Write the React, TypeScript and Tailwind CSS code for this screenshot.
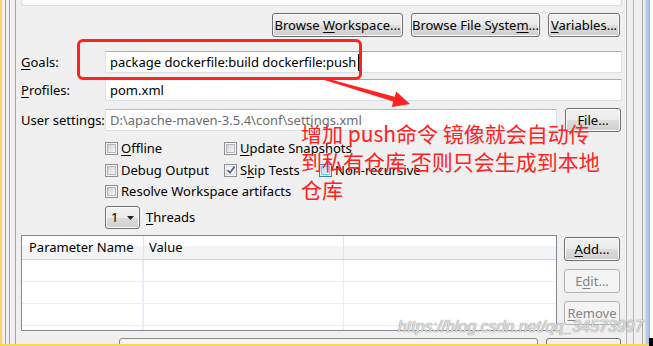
import clsx from 'clsx';
import type { ReactNode } from 'react';

const btnFace =
  'border-[#707070] bg-[linear-gradient(#f2f2f2,#ebebeb_50%,#dddddd_50%,#cfcfcf)] shadow-[inset_0_0_0_1px_#fcfcfc] text-black';

function Btn({ children, className, disabled }: { children: ReactNode; className?: string; disabled?: boolean }) {
  return (
    <div
      className={clsx(
        'flex h-[24px] shrink-0 items-center justify-center rounded-[3px] border',
        disabled ? 'border-[#adb2b5] bg-[#f4f4f4] text-[#838383]' : btnFace,
        className
      )}
    >
      <span className="whitespace-nowrap">{children}</span>
    </div>
  );
}

function U({ children }: { children: ReactNode }) {
  return <span className="underline underline-offset-[2px]">{children}</span>;
}

function Field({ children, className }: { children?: ReactNode; className?: string }) {
  return (
    <div
      className={clsx(
        'flex h-[22px] shrink-0 items-center whitespace-nowrap border border-[#dbe0e7] border-t-[#abadb3] bg-white pl-[4px]',
        className
      )}
    >
      {children}
    </div>
  );
}

function CheckBox({ checked, hot }: { checked?: boolean; hot?: boolean }) {
  return (
    <span
      className={clsx(
        'relative flex h-[13px] w-[13px] shrink-0 items-center justify-center border',
        hot ? 'border-[#3c7fb1] bg-[#eaf6fd]' : 'border-[#8f8f8f] bg-[#f6f6f6]'
      )}
    >
      <span
        className={clsx(
          'h-[9px] w-[9px] border',
          hot
            ? 'border-[#79c6f9] bg-[linear-gradient(135deg,#b1dffd,#e9f7fe)]'
            : checked
              ? 'border-[#dcdcdc] bg-[#fafafa]'
              : 'border-[#b4b8be] bg-[linear-gradient(135deg,#cfd2d7,#f7f7f7)]'
        )}
      />
      {checked && (
        <svg className="absolute left-[1px] top-[0px]" width="10" height="10" viewBox="0 0 10 10">
          <path d="M1.5 5.2 L4 7.8 L8.6 1.4" stroke="#4a5f97" strokeWidth="1.7" fill="none" />
        </svg>
      )}
    </span>
  );
}

function Check({ label, checked, hot }: { label: ReactNode; checked?: boolean; hot?: boolean }) {
  return (
    <div className="flex items-center gap-[3px] whitespace-nowrap">
      <CheckBox checked={checked} hot={hot} />
      <span>{label}</span>
    </div>
  );
}

export default function App() {
  return (
    <div className="relative h-[346px] w-[653px] overflow-hidden bg-[#f0f0f0] font-['Noto_Sans',sans-serif] text-[13px] leading-none text-black">
      <div className="flex h-[344px] overflow-hidden">
        {/* left frame */}
        <div className="flex shrink-0">
          <div className="w-[2px] bg-[#fdd45a]" />
          <div className="w-[3px]" />
          <div className="w-px bg-[#a3a3a3]" />
          <div className="w-[3px]" />
          <div className="w-px bg-[#a3a3a3]" />
          <div className="w-[5px]" />
          <div className="w-px bg-[#a3a3a3]" />
          <div className="w-[5px]" />
        </div>

        {/* main form */}
        <div className="w-[601px] shrink-0">
          <div className="h-[6px] rounded-b-[3px] border-x border-b border-[#dcdcdc] bg-[#fcfcfc]" />

          <div className="mt-[7px] flex justify-end gap-[8px] pr-[2px]">
            <Btn className="w-[131px]">
              Browse <U>W</U>orkspace...
            </Btn>
            <Btn className="w-[129px]">
              Browse File Syste<U>m</U>...
            </Btn>
            <Btn className="w-[72px]">
              <U>V</U>ariables...
            </Btn>
          </div>

          <div className="mt-[14px] flex items-center">
            <div className="w-[84px]">
              <U>G</U>oals:
            </div>
            <Field className="w-[517px] border-[#b7cde3] border-t-[#7da2ce]">
              <span>package dockerfile:build dockerfile:push</span>
              <span className="ml-[2px] h-[17px] w-px bg-black" />
            </Field>
          </div>

          <div className="mt-[6px] flex items-center">
            <div className="w-[84px]">
              <U>P</U>rofiles:
            </div>
            <Field className="w-[517px]">pom.xml</Field>
          </div>

          <div className="mt-[7px] flex h-[24px] items-center">
            <div className="w-[84px]">User settings:</div>
            <Field className="w-[452px] border-[#cfd3d8] border-t-[#b5b8bd] bg-[#fcfcfc] text-[#6d6d6d]">
              D:\apache-maven-3.5.4\conf\settings.xml
            </Field>
            <Btn className="ml-[8px] w-[56px]">File...</Btn>
          </div>

          <div className="mt-[5px] pl-[84px]">
            <div className="flex h-[22px] items-center">
              <div className="w-[119px]">
                <Check label={<><U>O</U>ffline</>} />
              </div>
              <Check label={<><U>U</U>pdate Snapshots</>} />
            </div>
            <div className="flex h-[22px] items-center">
              <div className="w-[119px]">
                <Check label={<>Debu<U>g</U> Output</>} />
              </div>
              <div className="w-[95px]">
                <Check checked label={<>S<U>k</U>ip Tests</>} />
              </div>
              <Check hot label="Non-recursive" />
            </div>
            <div className="flex h-[21px] items-center">
              <Check label="Resolve Workspace artifacts" />
            </div>
          </div>

          <div className="mt-[4px] flex items-center gap-[6px] pl-[84px]">
            <div className={clsx('flex h-[23px] w-[35px] items-center justify-between rounded-[3px] border pl-[5px] pr-[5px]', btnFace)}>
              <span>1</span>
              <svg width="7" height="4" viewBox="0 0 7 4">
                <path d="M0 0 H7 L3.5 4 Z" fill="#222" />
              </svg>
            </div>
            <span>
              <U>T</U>hreads
            </span>
          </div>

          <div className="mt-[6px] flex gap-[7px]">
            <div className="h-[96px] w-[536px] overflow-hidden border border-[#828790] bg-white">
              <div className="flex h-[24px] border-b border-[#d5d5d5] bg-[linear-gradient(#ffffff_45%,#f3f4f6_45%)]">
                <div className="flex w-[122px] items-center border-r border-[#e3e3e3] pl-[7px]">Parameter Name</div>
                <div className="flex w-[200px] items-center border-r border-[#e3e3e3] pl-[5px]">Value</div>
              </div>
              {[0, 1, 2, 3].map((i) => (
                <div key={i} className="flex h-[22px] border-b border-[#eeeeee]">
                  <div className="w-[122px] border-r-2 border-[#e8edf5]" />
                  <div className="w-[200px] border-r border-[#e8edf5]" />
                </div>
              ))}
            </div>
            <div className="mt-[2px] flex w-[56px] flex-col gap-[8px]">
              <Btn className="border-[#4a4a4a]">
                <U>A</U>dd...
              </Btn>
              <Btn disabled>
                E<U>d</U>it...
              </Btn>
              <Btn disabled>
                <U>R</U>emove
              </Btn>
            </div>
          </div>

          <div className="mt-[7px] flex gap-[8px] pl-[98px]">
            <div className="h-[20px] w-[419px] rounded-t-[3px] border border-[#8a8a8a] bg-[#f5f5f5]" />
            <div className={clsx('h-[20px] w-[75px] rounded-t-[3px] border', btnFace)} />
          </div>
        </div>

        {/* right frame */}
        <div className="flex shrink-0">
          <div className="w-[4px]" />
          <div className="w-px bg-[#b5b5b5]" />
          <div className="w-[6px]" />
          <div className="w-px bg-[#b5b5b5]" />
          <div className="w-[8px]" />
          <div className="w-px bg-[#a8a8a8]" />
          <div className="w-[2px]" />
          <div className="w-[5px] bg-[linear-gradient(90deg,#c9dbef,#98b8dc)]" />
          <div className="w-[3px] bg-white" />
        </div>
      </div>
      <div className="h-[2px] w-full bg-[#fdd45a]" />
      <div className="absolute bottom-0 right-0 h-[8px] w-[4px] bg-black" />

      {/* watermark */}
      <div className="absolute left-[398px] top-[319px] whitespace-nowrap font-['Liberation_Sans',sans-serif] text-[16px] italic text-[#ffffffb8] [text-shadow:0_0_1px_#8c8c8c,0_0_1px_#8c8c8c]">
        https://blog.csdn.net/qq_34573997
      </div>

      {/* annotation */}
      <div className="absolute left-[77px] top-[39px] h-[41px] w-[285px] rounded-[6px] border-[3px] border-[#ff2222]" />
      <svg className="absolute left-0 top-0" width="653" height="346" viewBox="0 0 653 346">
        <polygon
          points="323.3,77.5 394.7,96.8 396.2,91.5 410,104 391.8,106.9 393.3,101.6 322.7,79.5"
          fill="#ff2222"
        />
      </svg>
      <div className="absolute left-[301px] top-[119px] whitespace-pre font-['Noto_Sans_CJK_SC',sans-serif] text-[21px] leading-[28px] text-[#ff2222]">
        {'增加 push命令 镜像就会自动传\n到私有仓库 否则只会生成到本地\n仓库'}
      </div>
    </div>
  );
}
